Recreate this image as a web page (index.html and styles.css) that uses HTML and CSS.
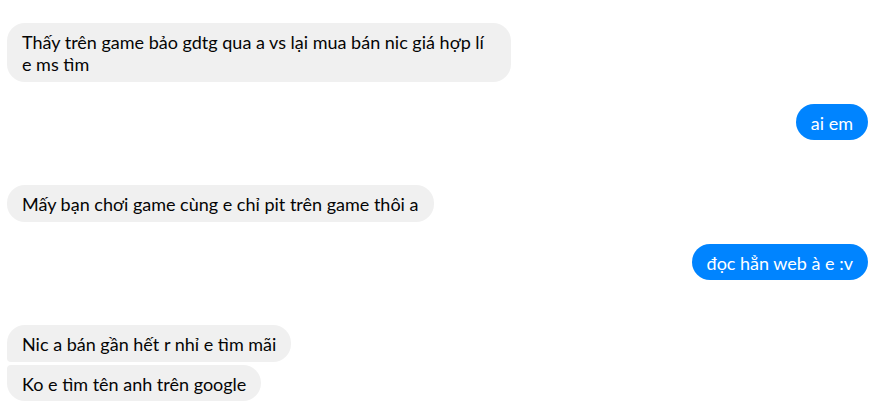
FILE: index.html
```html
<!DOCTYPE html>
<html lang="vi">
<head>
<meta charset="utf-8">
<title>Chat</title>
<link rel="stylesheet" href="styles.css">
</head>
<body>
<div class="chat">
  <div class="group in">
    <div class="bubble wrapped">Thấy trên game bảo gdtg qua a vs lại mua bán nic giá hợp lí<br>e ms tìm</div>
  </div>
  <div class="group out">
    <div class="bubble">ai em</div>
  </div>
  <div class="group in">
    <div class="bubble">Mấy bạn chơi game cùng e chỉ pit trên game thôi a</div>
  </div>
  <div class="group out">
    <div class="bubble">đọc hẳn web à e :v</div>
  </div>
  <div class="group in">
    <div class="bubble first">Nic a bán gần hết r nhỉ e tìm mãi</div>
    <div class="bubble last">Ko e tìm tên anh trên google</div>
  </div>
</div>
</body>
</html>
```
FILE: styles.css
```css
* { box-sizing: border-box; }
html, body { margin: 0; padding: 0; background: #fff; }
body {
  font-family: Lato, "Noto Sans", sans-serif;
  font-size: 18px;
  width: 890px;
  height: 410px;
  overflow: hidden;
}
.chat {
  display: flex;
  flex-direction: column;
  padding: 23px 22px 0 7px;
}
.group {
  display: flex;
  flex-direction: column;
  gap: 3px;
}
.group.in { align-items: flex-start; }
.group.out { align-items: flex-end; }
.group.in + .group.out { margin-top: 22px; }
.group.out + .group.in { margin-top: 45px; }
.bubble {
  max-width: 504px;
  padding: 8px 15px 6.5px;
  line-height: 22px;
  border-radius: 18px;
  white-space: nowrap;
}
.in .bubble { background: #f0f0f0; color: #050505; }
.out .bubble { background: #0084ff; color: #fff; }
.bubble.wrapped { width: 504px; }
.in .bubble.first { border-bottom-left-radius: 4px; }
.in .bubble.last { border-top-left-radius: 4px; }
```
